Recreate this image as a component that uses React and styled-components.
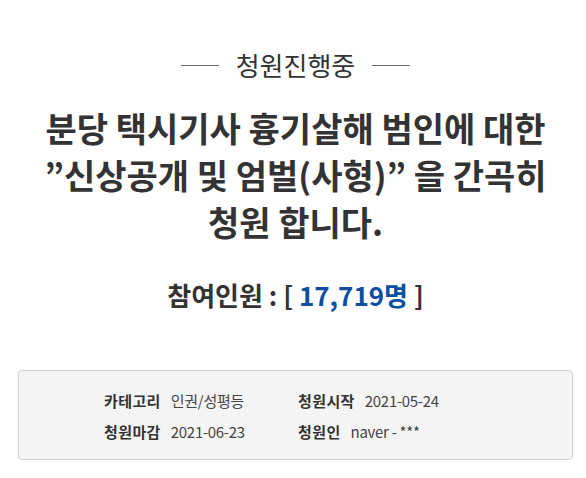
import styled, { createGlobalStyle } from "styled-components";

const GlobalStyle = createGlobalStyle`
  body {
    margin: 0;
    background: #ffffff;
    font-family: "Noto Sans CJK KR", "Noto Sans", sans-serif;
    color: #333333;
  }
`;

const Page = styled.div`
  display: flex;
  flex-direction: column;
  align-items: center;
  padding: 48px 13px 0 18px;
`;

const Status = styled.div`
  display: flex;
  align-items: center;
  gap: 17px;
  font-size: 26px;
  color: #333;
  line-height: 34px;

  &::before,
  &::after {
    content: "";
    width: 38px;
    height: 1px;
    background: #666;
  }
`;

const Title = styled.h1`
  margin: 22px 0 0;
  font-size: 34px;
  font-weight: 700;
  line-height: 47px;
  text-align: center;
  color: #333;
`;

const Count = styled.h2`
  margin: 33px 0 0;
  font-size: 26px;
  font-weight: 700;
  line-height: 34px;
  color: #333;

  em {
    font-style: normal;
    color: #0b4ea2;
  }
`;

const InfoBox = styled.div`
  align-self: stretch;
  margin-top: 58px;
  padding: 19px 0 16px 85px;
  border: 1px solid #d2d2d2;
  border-radius: 4px;
  background: #f5f5f5;
  display: grid;
  grid-template-columns: 194px 194px;
  row-gap: 9px;
`;

const Item = styled.div`
  display: flex;
  align-items: baseline;
  font-size: 15px;
  line-height: 22px;
  color: #333;
`;

const Label = styled.span`
  font-weight: 700;
  letter-spacing: 0.4px;
  margin-right: 10px;
`;

const Value = styled.span`
  color: #444;
  letter-spacing: -0.3px;
`;

const info = [
  ["카테고리", "인권/성평등"],
  ["청원시작", "2021-05-24"],
  ["청원마감", "2021-06-23"],
  ["청원인", "naver - ***"],
];

export default function App() {
  return (
    <>
      <GlobalStyle />
      <Page>
        <Status>청원진행중</Status>
        <Title>
          분당 택시기사 흉기살해 범인에 대한
          <br />
          ”신상공개 및 엄벌(사형)” 을 간곡히
          <br />
          청원 합니다.
        </Title>
        <Count>
          참여인원 : [ <em>17,719명</em> ]
        </Count>
        <InfoBox>
          {info.map(([label, value]) => (
            <Item key={label}>
              <Label>{label}</Label>
              <Value>{value}</Value>
            </Item>
          ))}
        </InfoBox>
      </Page>
    </>
  );
}
